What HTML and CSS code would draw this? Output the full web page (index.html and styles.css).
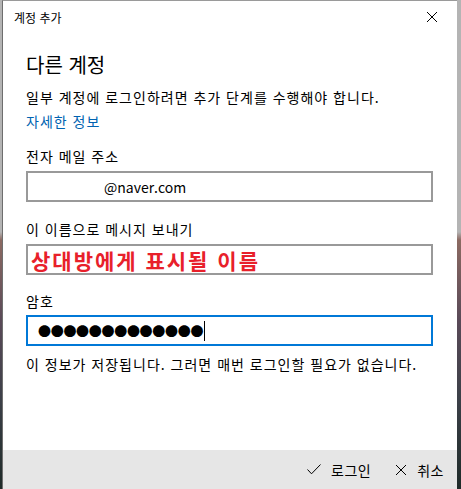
FILE: index.html
```html
<!DOCTYPE html>
<html lang="ko">
<head>
  <meta charset="UTF-8">
  <title>계정 추가</title>
  <link rel="stylesheet" href="styles.css">
</head>
<body>
  <div class="dialog">
    <div class="titlebar">
      <span class="title">계정 추가</span>
      <span class="close">
        <svg width="12" height="12" viewBox="0 0 12 12"><path d="M1 1L11 11M11 1L1 11" stroke="#000" stroke-width="1"/></svg>
      </span>
    </div>
    <div class="content">
      <h1>다른 계정</h1>
      <p class="desc">일부 계정에 로그인하려면 추가 단계를 수행해야 합니다.</p>
      <a class="link" href="#">자세한 정보</a>

      <label class="label">전자 메일 주소</label>
      <div class="field"><span class="email">@naver.com</span></div>

      <label class="label">이 이름으로 메시지 보내기</label>
      <div class="field"><span class="name">상대방에게 표시될 이름</span></div>

      <label class="label pw">암호</label>
      <div class="field focus"><span class="dots">●●●●●●●●●●●●●</span><span class="caret"></span></div>

      <p class="note">이 정보가 저장됩니다. 그러면 매번 로그인할 필요가 없습니다.</p>
    </div>
    <div class="footer">
      <span class="btn">
        <svg width="14" height="11" viewBox="0 0 14 11"><path d="M0.5 5.5L4.5 9.8L13.5 0.5" fill="none" stroke="#000" stroke-width="1"/></svg>
        로그인
      </span>
      <span class="btn">
        <svg width="12" height="12" viewBox="0 0 12 12"><path d="M1 1L11 11M11 1L1 11" stroke="#000" stroke-width="1"/></svg>
        취소
      </span>
    </div>
  </div>
</body>
</html>
```

FILE: styles.css
```css
* {
  margin: 0;
  padding: 0;
  box-sizing: border-box;
}
body {
  width: 461px;
  height: 489px;
  overflow: hidden;
  font-family: "Noto Sans CJK KR", "Noto Sans", sans-serif;
  color: #000;
  background: linear-gradient(#b4b4b4 0, #b4b4b4 232px, #8c6a62 240px, #5a4a58 320px, #3c4048 400px, #1e2a28 489px);
  padding-left: 2px;
}
.dialog {
  width: 455px;
  height: 489px;
  background: #fff;
  border-left: 1px solid #6e6e6e;
  border-top: 1px solid #9a9a9a;
  display: flex;
  flex-direction: column;
}
.titlebar {
  height: 32px;
  display: flex;
  align-items: center;
  justify-content: space-between;
  padding: 0 19px 0 11px;
}
.title {
  font-size: 12px;
}
.close svg {
  display: block;
}
.content {
  flex: 1;
  padding: 0 23px;
  letter-spacing: 1px;
}
h1 {
  font-size: 20px;
  font-weight: normal;
  margin-top: 18px;
  line-height: 28px;
  letter-spacing: 0;
}
.desc {
  font-size: 14px;
  margin-top: 8px;
  line-height: 20px;
}
.link {
  display: block;
  font-size: 14px;
  line-height: 20px;
  margin-top: 4px;
  color: #0063b1;
  text-decoration: none;
}
.label {
  display: block;
  font-size: 14px;
  line-height: 20px;
  margin-top: 15px;
}
.field {
  height: 31px;
  width: 407px;
  border: 2px solid #999;
  margin-top: 5px;
  display: flex;
  align-items: center;
  padding-left: 8px;
}
.field + .label {
  margin-top: 17px;
}
.field + .label.pw {
  margin-top: 16px;
}
.email {
  font-size: 14px;
  padding-left: 68px;
  letter-spacing: 0;
}
.name {
  color: #e8202a;
  font-weight: bold;
  font-size: 21px;
  letter-spacing: 2px;
  margin-left: -5px;
}
.focus {
  border-color: #0078d7;
  margin-top: 4px;
}
.dots {
  font-size: 13px;
  letter-spacing: -0.3px;
  padding-left: 2px;
}
.caret {
  width: 1px;
  height: 20px;
  background: #000;
  margin-left: 1px;
}
.note {
  font-size: 14px;
  line-height: 20px;
  margin-top: 8px;
}
.footer {
  height: 39px;
  background: #e6e6e6;
  display: flex;
  justify-content: flex-end;
  align-items: center;
  gap: 24px;
  padding-right: 13px;
  font-size: 14px;
  letter-spacing: 0.5px;
}
.btn {
  display: flex;
  align-items: center;
  gap: 10px;
}
```
